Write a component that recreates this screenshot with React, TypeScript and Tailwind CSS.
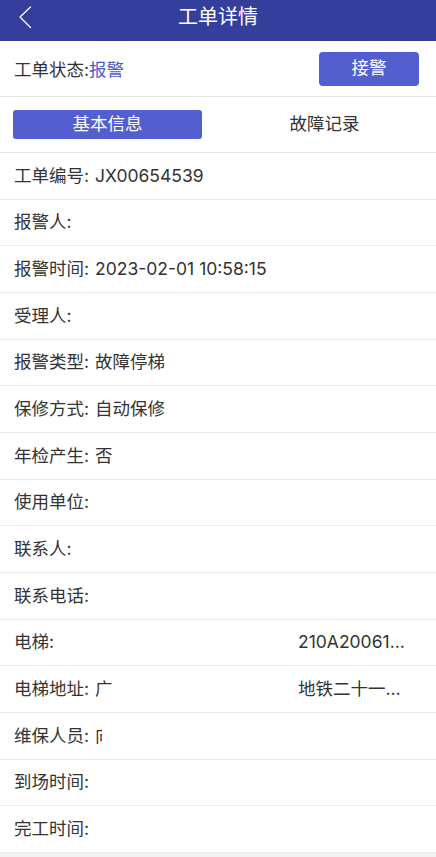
import React from 'react'

const font = { fontFamily: 'Inter, "Noto Sans CJK SC", sans-serif' }

interface Row {
  label: string
  value?: React.ReactNode
  right?: string
}

const rows: Row[] = [
  { label: '工单编号:', value: 'JX00654539' },
  { label: '报警人:' },
  { label: '报警时间:', value: '2023-02-01 10:58:15' },
  { label: '受理人:' },
  { label: '报警类型:', value: '故障停梯' },
  { label: '保修方式:', value: '自动保修' },
  { label: '年检产生:', value: '否' },
  { label: '使用单位:' },
  { label: '联系人:' },
  { label: '联系电话:' },
  { label: '电梯:', right: '210A20061…' },
  { label: '电梯地址:', value: '广', right: '地铁二十一…' },
  {
    label: '维保人员:',
    value: <span className="inline-block w-[7px] overflow-hidden align-bottom">向</span>,
  },
  { label: '到场时间:' },
  { label: '完工时间:' },
]

function BackIcon() {
  return (
    <svg width="14" height="24" viewBox="0 0 14 24" fill="none">
      <path d="M12.5 2 L2 12 L12.5 22.5" stroke="#fff" strokeWidth="1.3" strokeLinecap="round" strokeLinejoin="round" />
    </svg>
  )
}

export default function App() {
  return (
    <div className="min-h-screen bg-[#f2f2f2] text-[#333]" style={font}>
      <div className="h-[41px] bg-[#333f9a] relative">
        <div className="h-[34px] flex items-center justify-center">
          <span className="text-[20px] text-white leading-none">工单详情</span>
        </div>
        <div className="absolute left-[18px] top-[5px]">
          <BackIcon />
        </div>
      </div>

      <div className="bg-white">
        <div className="h-[56px] flex items-center justify-between pl-[14px] pr-[17px] border-b border-[#e6e6e6]">
          <span className="text-[17.5px] pt-[3px]">
            工单状态:<span className="text-[#4c5ac9]">报警</span>
          </span>
          <button className="w-[100px] h-[34px] rounded-[4px] bg-[#535fcf] text-white text-[17.5px]">接警</button>
        </div>

        <div className="h-[56px] flex items-center pl-[13px] border-b border-[#e6e6e6]">
          <div className="w-[189px] h-[29px] rounded-[3px] bg-[#535fcf] text-white text-[17.5px] flex items-center justify-center">
            基本信息
          </div>
          <div className="w-[189px] ml-[28px] text-[17.5px] text-center">故障记录</div>
        </div>

        {rows.map((r) => (
          <div key={r.label} className="h-[46.67px] flex items-center px-[14px] border-b border-[#ebebeb] text-[17.5px]">
            <span>{r.label}</span>
            {r.value && <span className="ml-[6px]">{r.value}</span>}
            {r.right && <span className="ml-auto w-[124px]">{r.right}</span>}
          </div>
        ))}
      </div>
    </div>
  )
}
